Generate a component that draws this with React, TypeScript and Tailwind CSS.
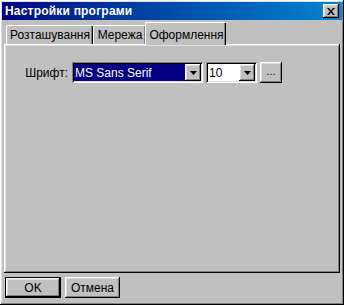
import React from "react";

const raised =
  "shadow-[inset_-1px_-1px_0_#000,inset_1px_1px_0_#fff,inset_-2px_-2px_0_#808080,inset_2px_2px_0_#dfdfdf]";
const sunken =
  "shadow-[inset_1px_1px_0_#808080,inset_-1px_-1px_0_#fff,inset_2px_2px_0_#000,inset_-2px_-2px_0_#dfdfdf]";

function Arrow() {
  return (
    <div className={`w-[16px] h-[17px] bg-[#c0c0c0] ${raised} flex items-center justify-center`}>
      <svg width="7" height="4" viewBox="0 0 7 4">
        <path d="M0 0h7L3.5 4z" fill="#000" />
      </svg>
    </div>
  );
}

export default function App() {
  return (
    <div
      className={`w-[344px] h-[305px] bg-[#c0c0c0] ${raised} p-[2px] flex flex-col text-[11px] text-black`}
      style={{ fontFamily: '"Liberation Sans", Arial, sans-serif' }}
    >
      {/* title bar */}
      <div className="h-[18px] bg-gradient-to-r from-[#000080] to-[#1084d0] flex items-center justify-between pl-[3px] pr-[3px]">
        <span className="text-white font-bold text-[12px] tracking-[0.2px]">Настройки програми</span>
        <div className={`w-[16px] h-[14px] bg-[#c0c0c0] ${raised} flex items-center justify-center`}>
          <svg width="8" height="7" viewBox="0 0 8 7">
            <path d="M0 0h2l2 2.5L6 0h2L5 3.5 8 7H6L4 4.5 2 7H0l3-3.5z" fill="#000" />
          </svg>
        </div>
      </div>

      {/* tabs */}
      <div className="flex items-end h-[23px] mt-[1px] pl-[2px] relative z-10">
        <div className="h-[19px] w-[87px] ml-[2px] border-l border-t border-white rounded-tl-[2px] shadow-[inset_-1px_0_0_#000,inset_-2px_0_0_#808080] flex items-center justify-center pb-[1px]">
          <span className="text-[12px]">Розташування</span>
        </div>
        <div className="h-[19px] w-[53px] border-l border-t border-white rounded-tl-[2px] shadow-[inset_-1px_0_0_#000,inset_-2px_0_0_#808080] flex items-center justify-center pb-[1px]">
          <span className="text-[12px]">Мережа</span>
        </div>
        <div className="h-[23px] w-[81px] -ml-[1px] -mb-[1px] bg-[#c0c0c0] border-l border-t border-white rounded-tl-[2px] shadow-[inset_-1px_0_0_#000,inset_-2px_0_0_#808080] flex items-start justify-center pt-[3px]">
          <span className="text-[12px] pl-[1px]">Оформлення</span>
        </div>
      </div>

      {/* panel */}
      <div className={`mx-[2px] h-[229px] ${raised} border-0 flex flex-col`}>
        <div className="flex items-center mt-[18px]">
          <span className="w-[68px] text-right pr-[4px] text-[12px]">Шрифт:</span>
          <div className={`w-[131px] h-[21px] bg-white ${sunken} p-[2px] flex items-center`}>
            <div className="flex-1 h-[17px] bg-[#000080] text-white text-[12px] flex items-center pl-[1px]">
              MS Sans Serif
            </div>
            <Arrow />
          </div>
          <div className={`ml-[3px] w-[51px] h-[21px] bg-white ${sunken} p-[2px] flex items-center`}>
            <div className="flex-1 h-[17px] text-[12px] flex items-center pl-[1px]">10</div>
            <Arrow />
          </div>
          <div className={`ml-[3px] w-[22px] h-[21px] bg-[#c0c0c0] ${raised} flex items-center justify-center text-[11px] pb-[2px]`}>
            ...
          </div>
        </div>
      </div>

      {/* buttons */}
      <div className="flex items-center mt-[4px] pl-[3px] gap-[4px]">
        <div className="w-[56px] h-[21px] border border-black">
          <div className={`w-full h-full bg-[#c0c0c0] ${raised} flex items-center justify-center text-[12px]`}>OK</div>
        </div>
        <div className={`w-[55px] h-[21px] bg-[#c0c0c0] ${raised} flex items-center justify-center text-[12px]`}>
          Отмена
        </div>
      </div>
    </div>
  );
}
